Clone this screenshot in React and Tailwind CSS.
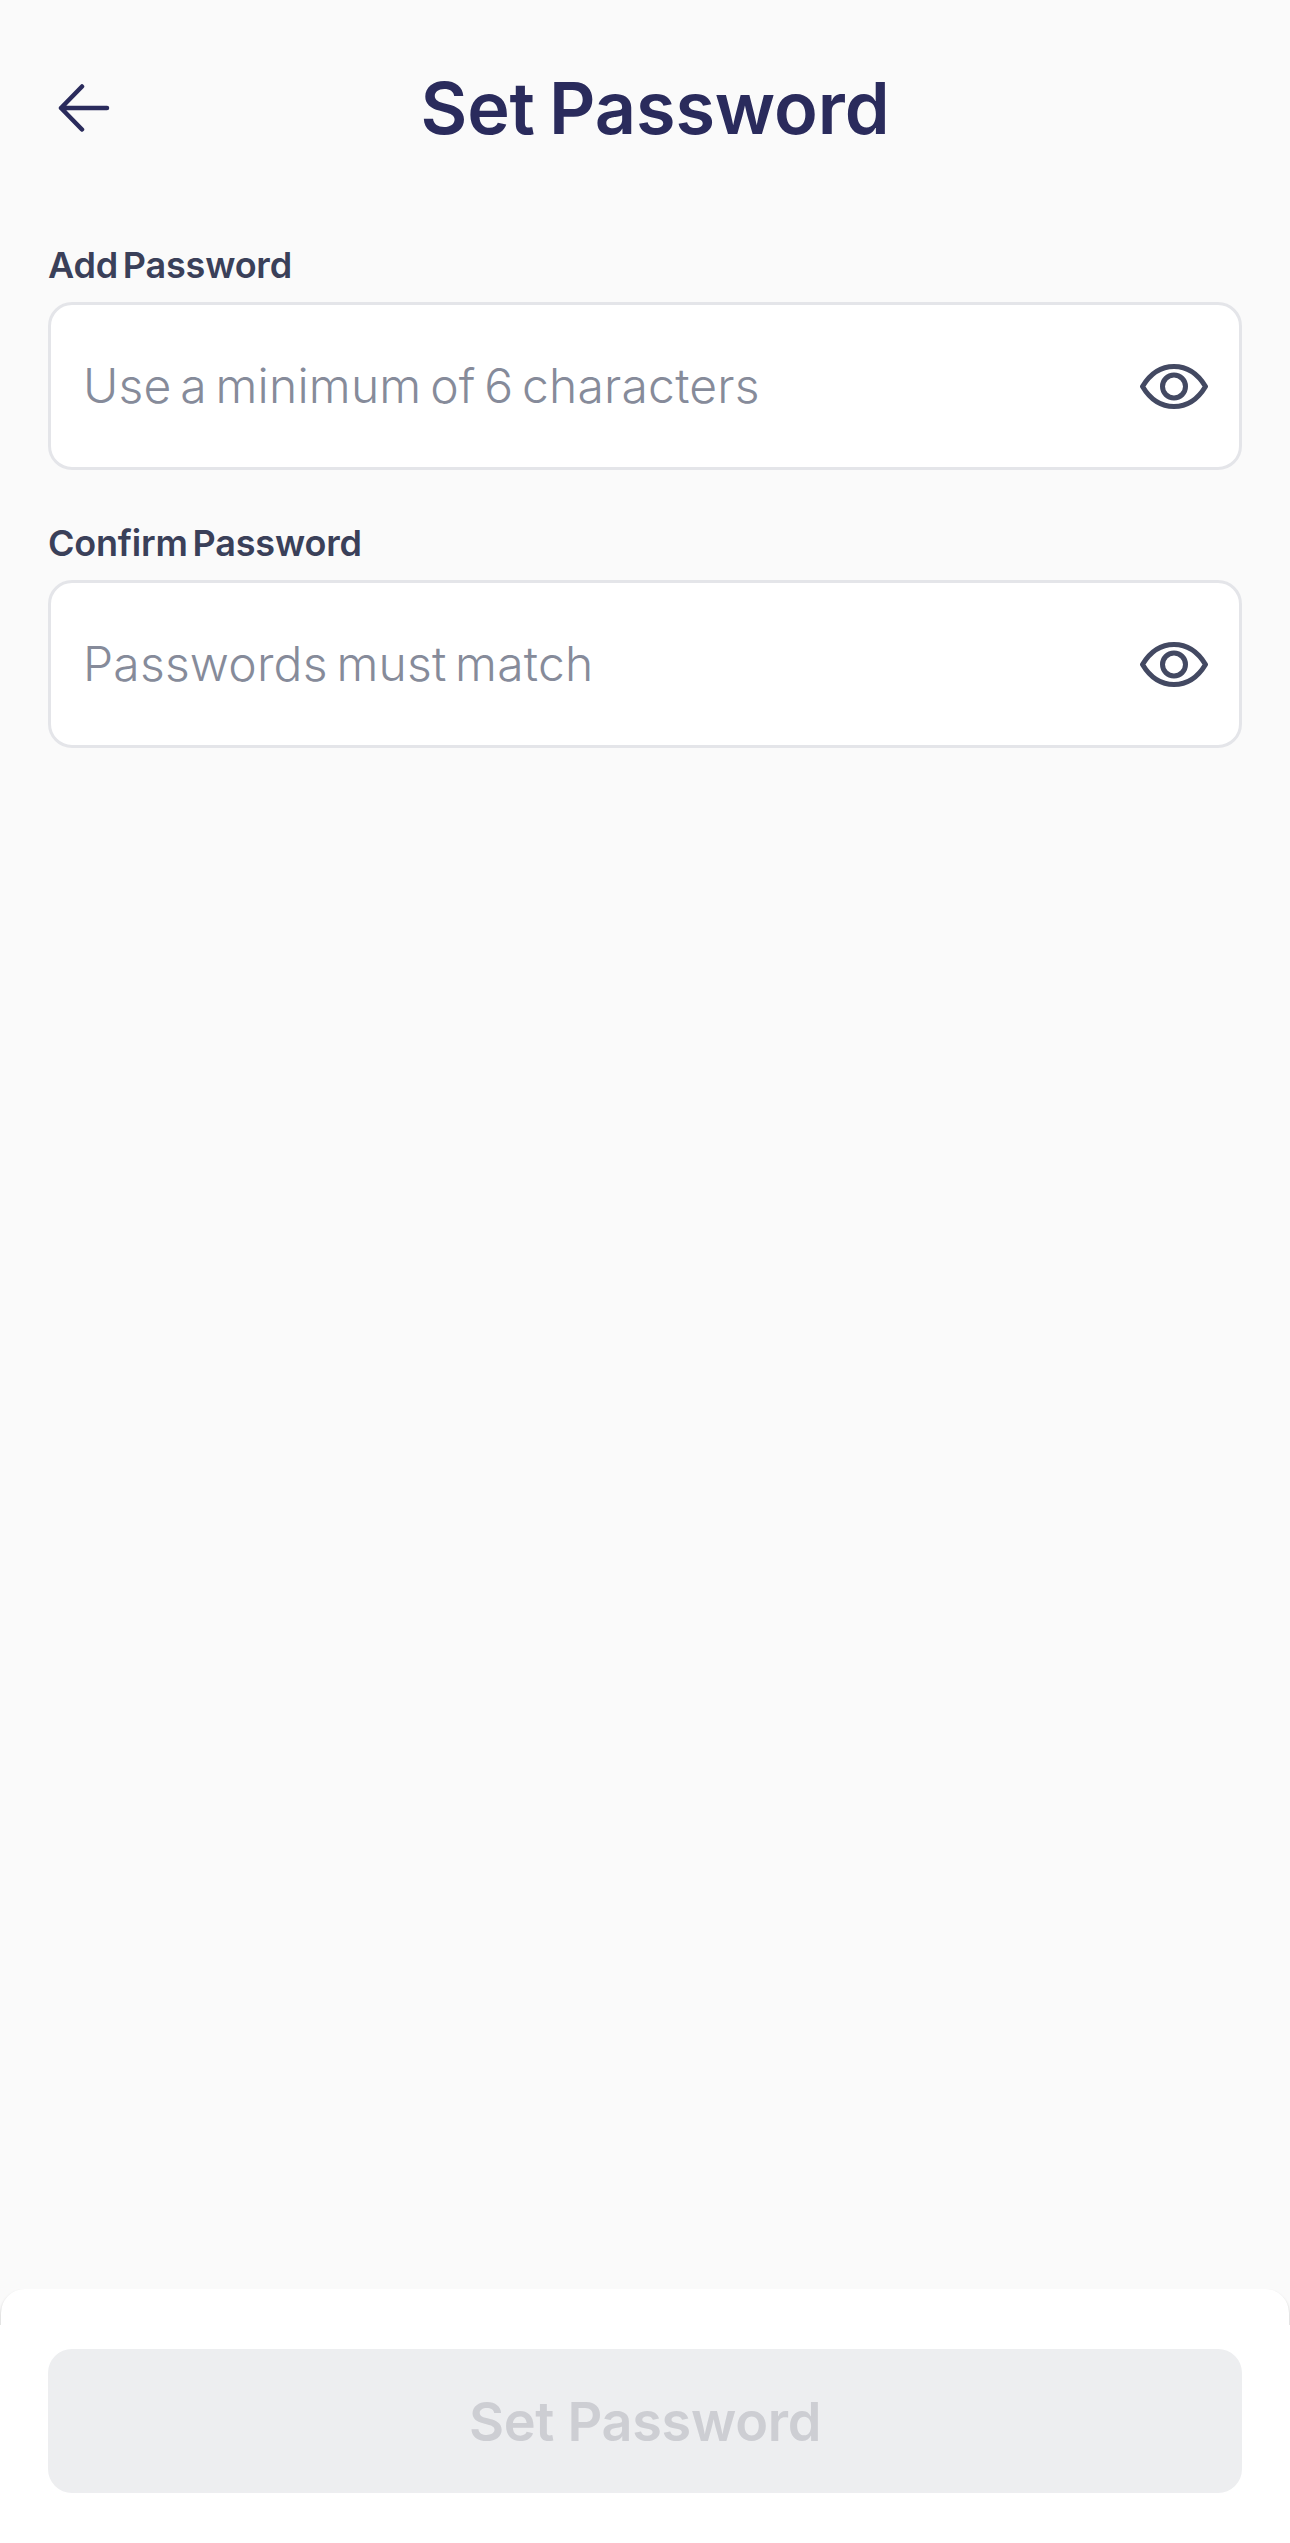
import React from "react";

const EyeIcon = () => (
  <svg width="68" height="45" viewBox="0 0 68 45" fill="none" stroke="#434962" strokeWidth="5" strokeLinejoin="round" className="mr-[2px] shrink-0">
    <path d="M2.5 22.5C10 10 21 2.5 34 2.5C47 2.5 58 10 65.5 22.5C58 35 47 42.5 34 42.5C21 42.5 10 35 2.5 22.5Z" />
    <circle cx="34" cy="22.5" r="11.5" />
  </svg>
);

const PasswordField = ({ label, placeholder }) => (
  <div>
    <label className="block h-[36px] text-[36px] leading-[36px] font-semibold text-[#3a4059] tracking-[-0.2px] [word-spacing:-4px] whitespace-nowrap">
      {label}
    </label>
    <div className="mt-[19px] flex h-[168px] items-center rounded-[24px] border-[3px] border-[#e4e5e9] bg-white pl-[32px] pr-[29px]">
      <input
        type="password"
        placeholder={placeholder}
        className="min-w-0 flex-1 bg-transparent text-[48px] font-light tracking-[0.2px] [word-spacing:-5px] text-[#3a4059] outline-none placeholder:text-[#868b9a]"
      />
      <EyeIcon />
    </div>
  </div>
);

export default function App() {
  return (
    <div className="flex h-[2543px] flex-col bg-[#fafafa] font-['Inter',sans-serif]">
      <header className="relative flex h-[218px] shrink-0 items-start justify-center pt-[72px]">
        <button className="absolute left-[58px] top-[83px]">
          <svg width="52" height="50" viewBox="0 0 52 50" fill="none" stroke="#2a2b5c" strokeWidth="4.5" strokeLinecap="round" strokeLinejoin="round" className="block">
            <path d="M24 3.5L3 25L24 46.5M3 25H49" />
          </svg>
        </button>
        <h1 className="pl-[20px] text-[72px] font-semibold leading-none tracking-[-0.1px] [word-spacing:-4px] text-[#2a2b5c]">Set Password</h1>
      </header>

      <main className="flex flex-1 flex-col gap-[55px] px-[48px] pt-[29px]">
        <PasswordField label="Add Password" placeholder="Use a minimum of 6 characters" />
        <PasswordField label="Confirm Password" placeholder="Passwords must match" />
      </main>

      <footer className="shrink-0 overflow-hidden">
        <div className="mx-px h-[36px] rounded-t-[24px] bg-white shadow-[0_2px_3px_rgba(0,0,0,0.25)]" />
        <div className="relative h-[218px] bg-white px-[48px] pt-[24px]">
          <button disabled className="flex h-[144px] w-full items-center justify-center rounded-[24px] bg-[#edeef0] text-[54px] font-semibold tracking-[-0.3px] text-[#cdced3]">
            Set Password
          </button>
        </div>
      </footer>
    </div>
  );
}
